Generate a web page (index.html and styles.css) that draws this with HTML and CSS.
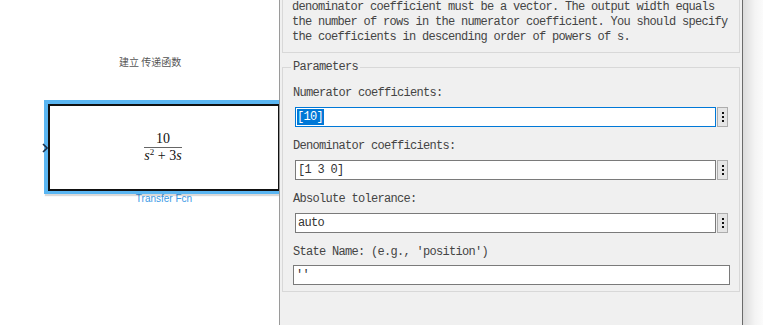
FILE: index.html
```html
<!DOCTYPE html>
<html lang="zh">
<head>
  <meta charset="UTF-8">
  <title>Transfer Fcn - Block Parameters</title>
  <link rel="stylesheet" href="styles.css">
</head>
<body>
  <!-- Model canvas -->
  <div class="canvas">
    <div class="model-title">建立 传递函数</div>
    <div class="block selected">
      <svg class="inport" width="6" height="10" viewBox="0 0 6 10">
        <path d="M1 1 L5 5 L1 9" fill="none" stroke="#1b2f4a" stroke-width="1.6"/>
      </svg>
      <div class="block-body">
        <span class="frac">
          <span class="num">10</span>
          <span class="den"><i>s</i><sup>2</sup> + 3<i>s</i></span>
        </span>
      </div>
    </div>
    <div class="block-name">Transfer Fcn</div>
  </div>

  <!-- Block parameters dialog -->
  <div class="dialog">
    <div class="description">
      <p>denominator coefficient must be a vector. The output width equals<br>the number of rows in the numerator coefficient. You should specify<br>the coefficients in descending order of powers of s.</p>
    </div>

    <fieldset class="params">
      <legend>Parameters</legend>

      <div class="param">
        <label>Numerator coefficients:</label>
        <div class="row">
          <div class="field active"><span class="sel">[10]</span></div>
          <div class="more"><i></i><i></i><i></i></div>
        </div>
      </div>

      <div class="param">
        <label>Denominator coefficients:</label>
        <div class="row">
          <div class="field">[1 3 0]</div>
          <div class="more"><i></i><i></i><i></i></div>
        </div>
      </div>

      <div class="param">
        <label>Absolute tolerance:</label>
        <div class="row">
          <div class="field">auto</div>
          <div class="more"><i></i><i></i><i></i></div>
        </div>
      </div>

      <div class="param last">
        <label>State Name: (e.g., 'position')</label>
        <div class="field">''</div>
      </div>
    </fieldset>
  </div>

  <div class="edge-shadow"></div>
</body>
</html>
```

FILE: styles.css
```css
/* General */
* {
  box-sizing: border-box;
}

body {
  margin: 0;
  width: 763px;
  height: 325px;
  overflow: hidden;
  display: flex;
  background: #fff;
}

/* Canvas */
.canvas {
  width: 279px;
  flex: none;
  overflow: hidden;
  padding-top: 55px;
}

.model-title {
  padding-left: 119px;
  height: 14px;
  line-height: 14px;
  font-family: "Noto Sans CJK SC", sans-serif;
  font-size: 10px;
  color: #555;
  white-space: nowrap;
}

.block {
  position: relative;
  margin: 31px 0 0 44px;
  width: 240px;
  padding: 4px 4px 3px 4px;
  background: #5ab6f2;
  box-shadow: 1px 2px 1px rgba(0, 0, 0, 0.15);
}

.inport {
  position: absolute;
  left: -2px;
  top: 43px;
}

.block-body {
  height: 87px;
  border: 2px solid #111;
  background: #fff;
  display: flex;
  justify-content: center;
  align-items: center;
  padding-right: 2px;
}

.frac {
  display: inline-flex;
  flex-direction: column;
  align-items: center;
  font-family: "Liberation Serif", serif;
  font-size: 14px;
  color: #111;
  margin-top: 0;
}

.num {
  line-height: 14px;
  padding: 0 4px 1px;
  border-bottom: 1px solid #666;
  align-self: stretch;
  text-align: center;
}

.den {
  line-height: 16px;
  white-space: nowrap;
}

.den i {
  font-style: italic;
}

.den sup {
  font-size: 9px;
  vertical-align: 5px;
  line-height: 0;
}

.block-name {
  margin-left: 44px;
  width: 240px;
  text-align: center;
  font-family: "Liberation Sans", Arial, sans-serif;
  font-size: 10px;
  line-height: 10px;
  color: #3a9ae6;
}

/* Dialog */
.dialog {
  width: 464px;
  flex: none;
  background: #f0f0f0;
  border-left: 1px solid #9a9a9a;
  border-right: 1px solid #6a6a6a;
  padding: 0 2px;
  font-family: "Liberation Mono", monospace;
  font-size: 12px;
  letter-spacing: -0.7px;
  color: #444;
}

.description {
  border: 1px solid #d8d8d8;
  border-top: none;
  padding: 0 6px 7px 9px;
}

.description p {
  margin: 0;
  line-height: 15px;
  white-space: nowrap;
}

.params {
  margin: 7px 0 0;
  padding: 12px 9px 6px 10px;
  border: 1px solid #d8d8d8;
  min-width: 0;
}

.params legend {
  margin-left: -2px;
  padding: 0 2px;
  line-height: 14px;
}

.param {
  margin-bottom: 12px;
}

.param.last {
  margin-bottom: 0;
}

.param label {
  display: block;
  height: 15px;
  line-height: 15px;
  margin-bottom: 6px;
  white-space: nowrap;
}

.param.last label {
  margin-bottom: 5px;
}

.row {
  display: flex;
  gap: 1px;
  margin: 0 2px;
}

.field {
  flex: 1;
  height: 20px;
  line-height: 18px;
  border: 1px solid #7a7a7a;
  background: #fff;
  padding-left: 2px;
  color: #333;
  white-space: nowrap;
}

.field.active {
  border-color: #0078d7;
  padding-left: 1px;
}

.sel {
  background: #0078d7;
  color: #fff;
  padding: 1px 1px 1px 0;
}

.more {
  width: 11px;
  height: 20px;
  border: 1px solid #adadad;
  background: #e5e5e5;
  display: flex;
  flex-direction: column;
  align-items: center;
  justify-content: center;
  gap: 2px;
}

.more i {
  display: block;
  width: 2px;
  height: 2px;
  background: #111;
}

/* Shadow on the right of the dialog */
.edge-shadow {
  flex: 1;
  background: linear-gradient(to right, #dcdcdc, #f4f4f4 60%, #fbfbfb);
}
```
